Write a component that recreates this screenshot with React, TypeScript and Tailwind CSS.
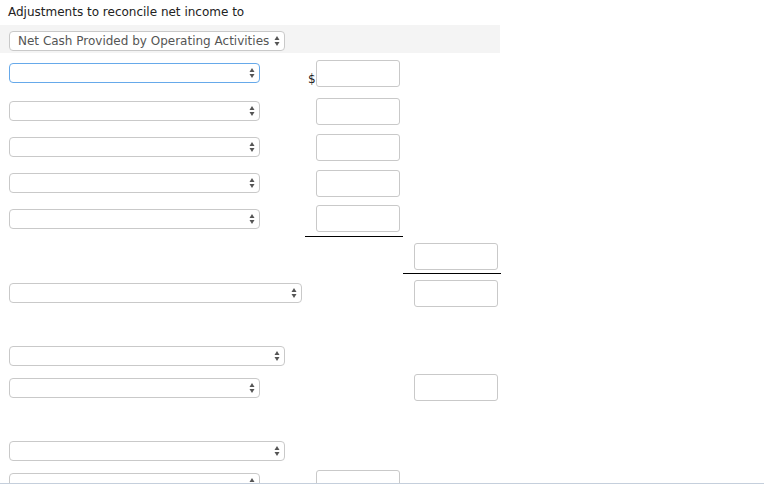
import React from "react";

const font = { fontFamily: '"DejaVu Sans", Verdana, sans-serif' };

function Arrows() {
  return (
    <svg
      width="6"
      height="11"
      viewBox="0 0 6 11"
      className="pointer-events-none absolute right-[4px] top-1/2 -translate-y-1/2"
    >
      <path d="M3 0.5 L5.5 4.5 L0.5 4.5 Z" fill="#555" />
      <path d="M3 10.5 L5.5 6.5 L0.5 6.5 Z" fill="#555" />
    </svg>
  );
}

function Select({ w, focus, label }: { w: string; focus?: boolean; label?: string }) {
  return (
    <div
      className={`relative h-[20px] ${w} rounded-[4px] border bg-white ${
        focus ? "border-[#66a9ea]" : "border-[#c9c9c9]"
      }`}
    >
      {label && (
        <span className="absolute left-[8px] top-1/2 -translate-y-1/2 whitespace-nowrap text-[12px] text-[#555]">
          {label}
        </span>
      )}
      <Arrows />
    </div>
  );
}

function Box() {
  return <div className="h-[27px] w-[84px] rounded-[3px] border border-[#c9c9c9] bg-white" />;
}

function Row({
  h,
  select,
  mid,
  dollar,
  right,
  lineMid,
  lineRight,
  rightPad = "",
}: {
  h: string;
  select?: React.ReactNode;
  mid?: boolean;
  dollar?: boolean;
  right?: boolean;
  lineMid?: boolean;
  lineRight?: boolean;
  rightPad?: string;
}) {
  return (
    <div className={`flex ${h}`}>
      <div className="flex w-[305px] items-center pl-[9px]">{select}</div>
      <div className={`flex w-[98px] items-center ${lineMid ? "border-b border-black" : ""}`}>
        <span className="w-[11px] self-center pl-[3px] pt-[11px] text-[12px] leading-none text-[#222]">
          {dollar ? "$" : ""}
        </span>
        {mid && <Box />}
      </div>
      <div
        className={`flex w-[98px] items-center pl-[11px] ${rightPad} ${
          lineRight ? "border-b border-black" : ""
        }`}
      >
        {right && <Box />}
      </div>
    </div>
  );
}

export default function App() {
  return (
    <div className="h-[487px] w-[764px] bg-white" style={font}>
      <div className="h-[484px] overflow-hidden border-b border-[#c5cfdc]">
        <div className="h-[25px] pl-[8px] pt-[4px] text-[12px] leading-[16px] text-[#222]">
          Adjustments to reconcile net income to
        </div>
        <div className="flex h-[28px] w-[500px] items-start bg-[#f4f4f4] pl-[9px] pt-[6px]">
          <Select w="w-[276px]" label="Net Cash Provided by Operating Activities" />
        </div>
        <Row h="h-[40px]" select={<Select w="w-[251px]" focus />} mid dollar />
        <Row h="h-[36px]" select={<Select w="w-[251px]" />} mid />
        <Row h="h-[36px]" select={<Select w="w-[251px]" />} mid />
        <Row h="h-[36px]" select={<Select w="w-[251px]" />} mid />
        <Row h="h-[36px]" select={<Select w="w-[251px]" />} mid lineMid />
        <Row h="h-[37px]" right lineRight rightPad="pt-[2px]" />
        <Row h="h-[38px]" select={<Select w="w-[293px]" />} right />
        <div className="h-[28px]" />
        <Row h="h-[31px]" select={<Select w="w-[276px]" />} />
        <Row h="h-[33px]" select={<Select w="w-[251px]" />} right />
        <div className="h-[31px]" />
        <Row h="h-[31px]" select={<Select w="w-[276px]" />} />
        <Row h="h-[34px]" select={<Select w="w-[251px]" />} mid />
      </div>
    </div>
  );
}
